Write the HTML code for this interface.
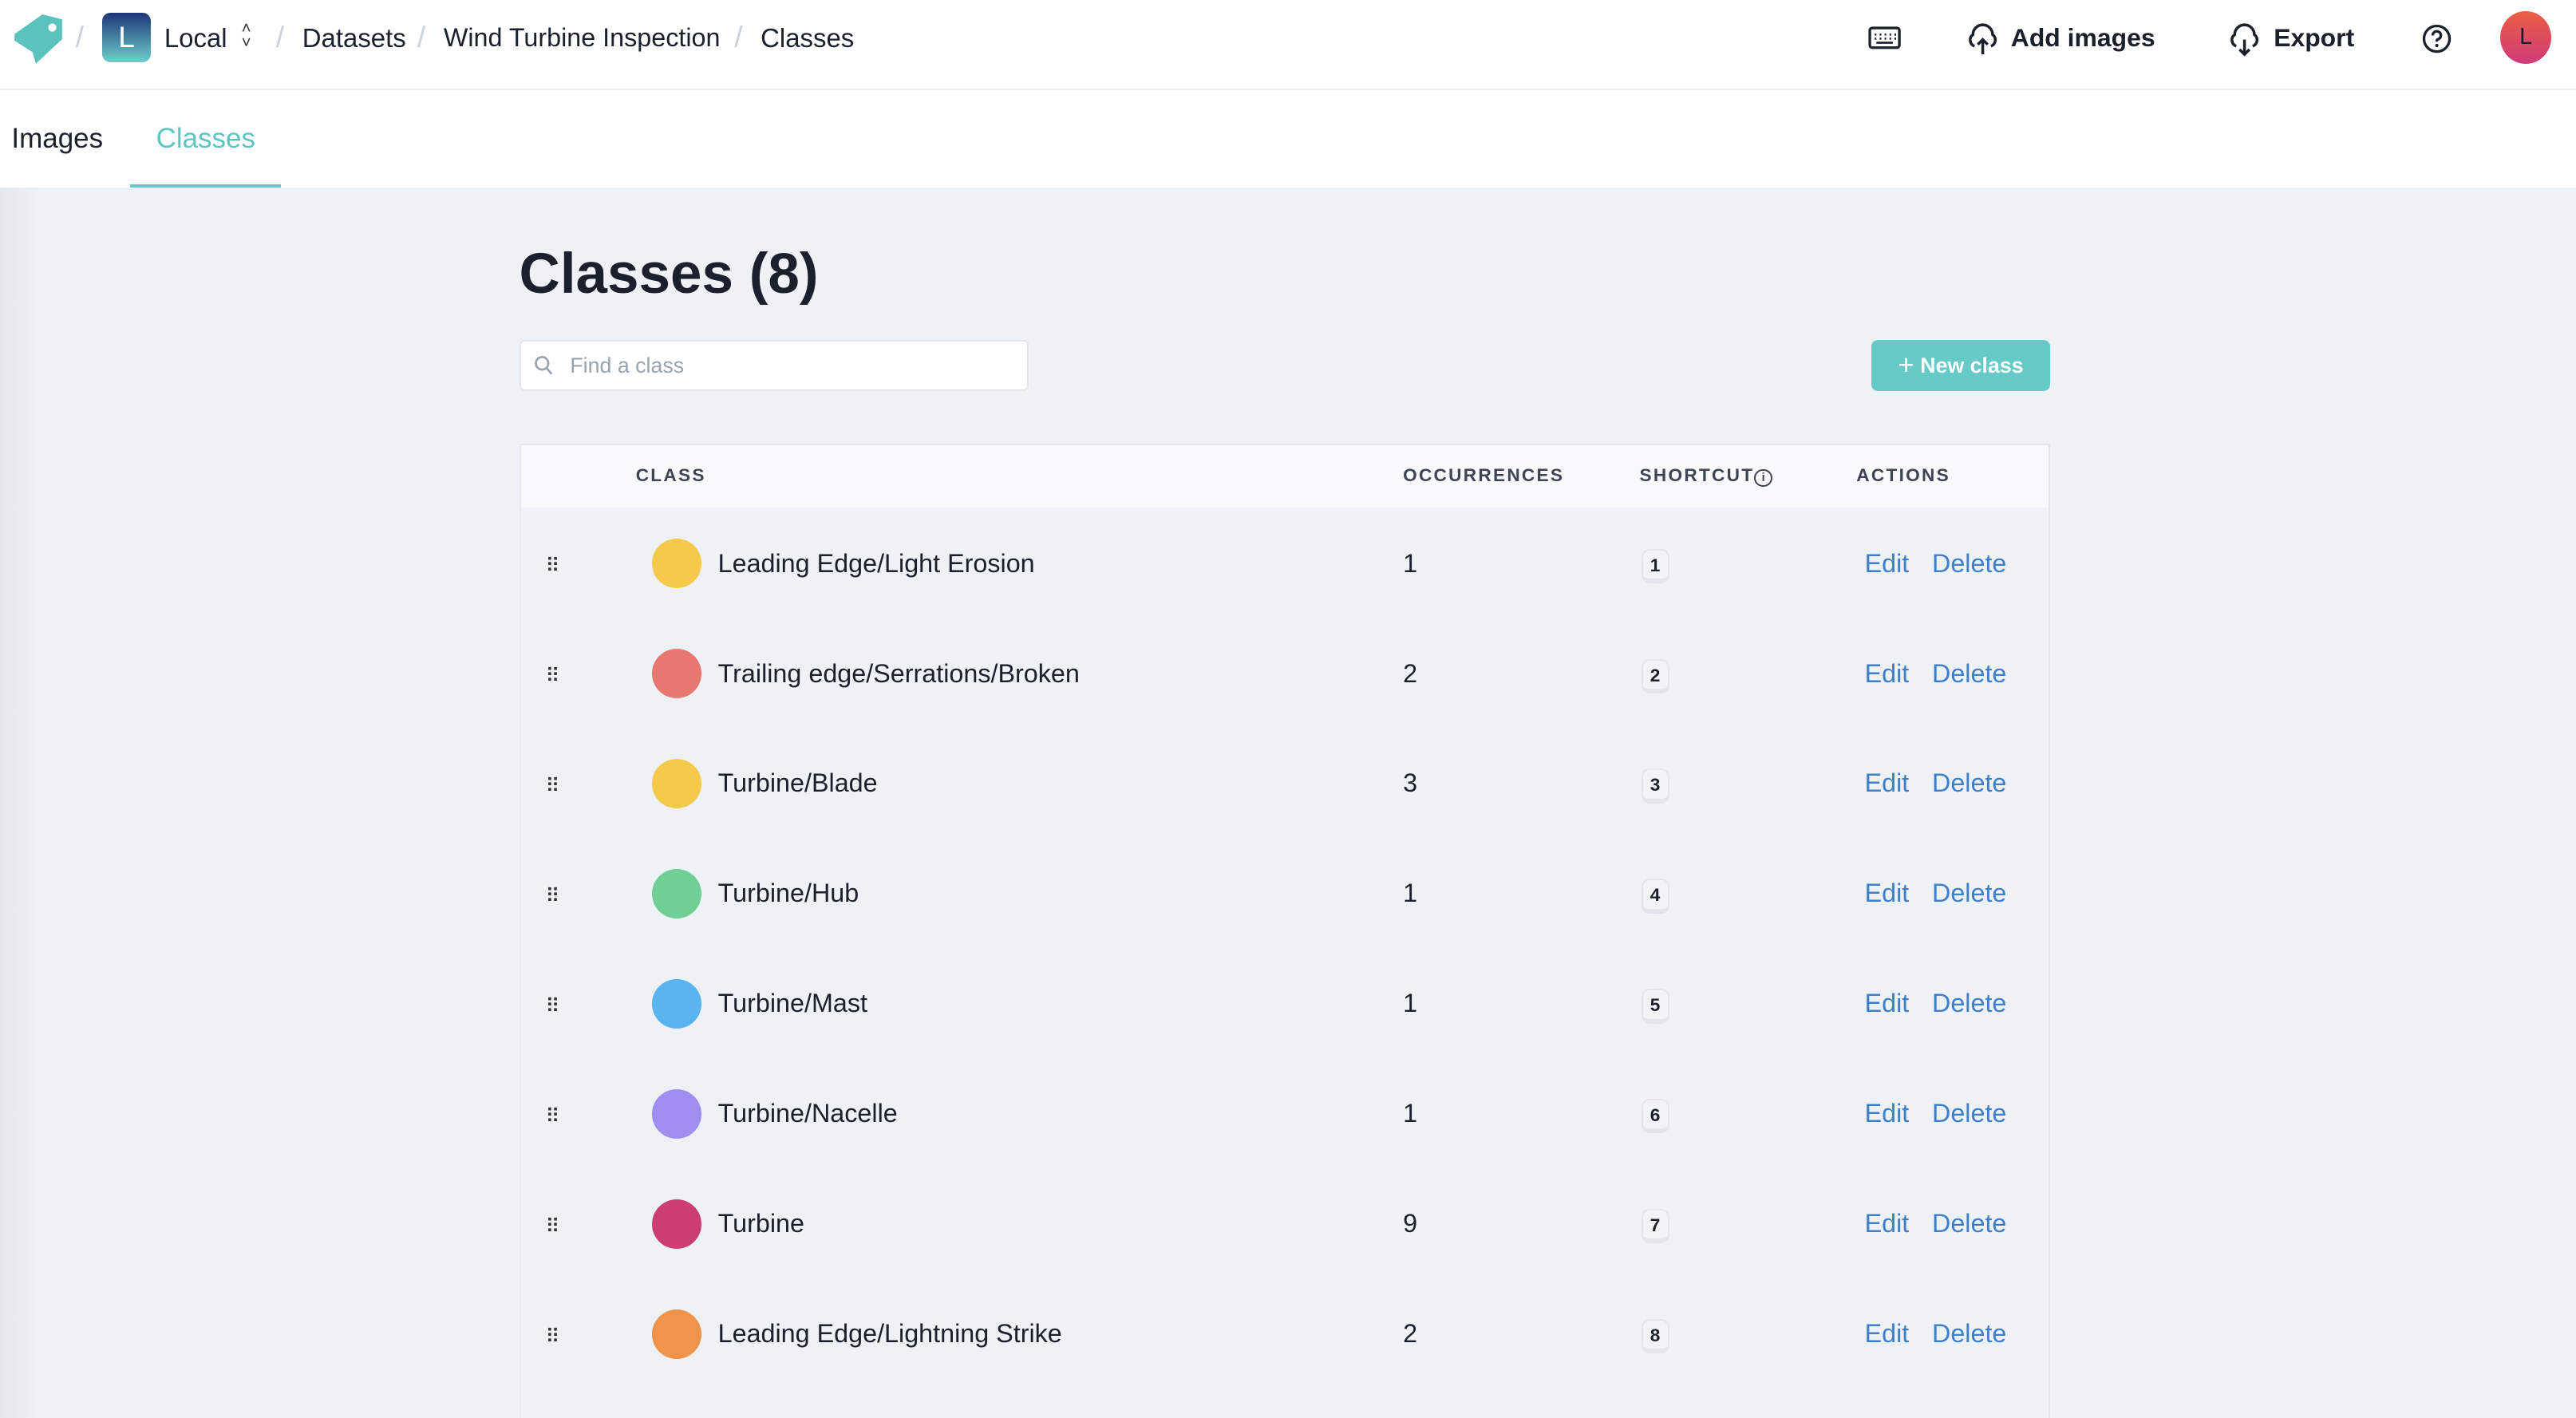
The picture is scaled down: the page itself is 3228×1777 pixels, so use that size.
<!DOCTYPE html>
<html><head><meta charset="utf-8"><style>
html,body{margin:0;padding:0;}
html{width:3228px;height:1776px;overflow:hidden;background:#eef1f6;}
body{zoom:2.05867;width:1568px;height:863px;position:relative;font-family:"Liberation Sans",sans-serif;color:#1a202c;background:#eef1f6;overflow:hidden;}
.abs{position:absolute;}
.top{left:0;top:0;width:1568px;height:54px;background:#fff;border-bottom:1px solid #e8ecf1;}
.tabs{left:0;top:55px;width:1568px;height:59px;background:#fff;}
.crumb{top:14px;font-size:16px;color:#1a202c;}
.sl{top:12px;font-size:18px;color:#cbd2dc;}
.shade{left:0;top:114px;width:24px;height:749px;background:linear-gradient(90deg,#e4e7ec,#eef1f6);}
.row{left:316px;width:932px;height:67px;}
.row .drag{position:absolute;left:16px;top:33px;font-size:12px;line-height:6px;color:#333;letter-spacing:1px}
.row .dot{position:absolute;left:81px;top:19px;width:30px;height:30px;border-radius:50%;}
.row .nm{position:absolute;left:121px;top:25px;font-size:15.7px;}
.row .oc{position:absolute;left:538px;top:25px;font-size:15.7px;}
.row .bd{position:absolute;left:683px;top:25px;width:17px;border:1px solid #e2e6ec;border-bottom-width:3px;border-radius:5px;background:#f1f3f7;font-size:11px;font-weight:bold;text-align:center;line-height:18px;box-sizing:border-box;height:21px}
.row .ed{position:absolute;left:819px;top:25px;font-size:15.7px;color:#3d7fc9;}
.row .de{position:absolute;left:860px;top:25px;font-size:15.7px;color:#3d7fc9;}
.th{top:283px;font-size:11px;font-weight:bold;letter-spacing:1.1px;color:#3d4554;}
</style></head><body>
<div class="abs top"></div>
<svg class="abs" style="left:6px;top:8px" width="34" height="32" viewBox="0 0 34 32"><path d="M3 13 L20 1 L32 4 L32 16 L16 31 L14 24 L3 17 Z" fill="#5bc2bd"/><circle cx="26" cy="9" r="2.5" fill="#fff"/></svg>
<div class="abs sl" style="left:46px">/</div>
<div class="abs" style="left:62px;top:8px;width:30px;height:30px;border-radius:5px;background:linear-gradient(#1e3577,#6dd0cc);color:#fff;font-size:18px;text-align:center;line-height:30px">L</div>
<div class="abs crumb" style="left:100px">Local</div>
<div class="abs" style="left:147px;top:13px;font-size:10px;line-height:9px;color:#333">˄<br>˅</div>
<div class="abs sl" style="left:168px">/</div>
<div class="abs crumb" style="left:184px">Datasets</div>
<div class="abs sl" style="left:254px">/</div>
<div class="abs crumb" style="left:270px;font-size:15.7px">Wind Turbine Inspection</div>
<div class="abs sl" style="left:447px">/</div>
<div class="abs crumb" style="left:463px">Classes</div>
<svg class="abs" style="left:1137px;top:16px" width="20" height="14" viewBox="0 0 20 14"><rect x="1" y="1" width="18" height="12" rx="1.5" fill="none" stroke="#1a202c" stroke-width="1.6"/><path d="M4 5h1M7 5h1M10 5h1M13 5h1M16 5h1M4 7.5h1M7 7.5h1M10 7.5h1M13 7.5h1M16 7.5h1M5 10h10" stroke="#1a202c" stroke-width="1.3"/></svg>
<svg class="abs" style="left:1197px;top:13px" width="20" height="22" viewBox="0 0 20 22"><path d="M5 15 A4 4 0 0 1 4 8 A6 6 0 0 1 16 8 A4 4 0 0 1 15 15" fill="none" stroke="#1a202c" stroke-width="1.7"/><path d="M10 20V11M7 14l3-3 3 3" fill="none" stroke="#1a202c" stroke-width="1.7"/></svg>
<div class="abs crumb" style="left:1224px;top:14px;font-weight:bold;font-size:15.5px">Add images</div>
<svg class="abs" style="left:1356px;top:13px" width="20" height="22" viewBox="0 0 20 22"><path d="M5 15 A4 4 0 0 1 4 8 A6 6 0 0 1 16 8 A4 4 0 0 1 15 15" fill="none" stroke="#1a202c" stroke-width="1.7"/><path d="M10 11V20M7 17l3 3 3-3" fill="none" stroke="#1a202c" stroke-width="1.7"/></svg>
<div class="abs crumb" style="left:1384px;top:14px;font-weight:bold;font-size:15.5px">Export</div>
<svg class="abs" style="left:1474px;top:14px" width="19" height="19" viewBox="0 0 19 19"><circle cx="9.5" cy="9.5" r="7.8" fill="none" stroke="#1a202c" stroke-width="1.6"/><path d="M7 7.5a2.5 2.5 0 1 1 3 2.4c-.5.2-.5.6-.5 1.4" fill="none" stroke="#1a202c" stroke-width="1.6"/><circle cx="9.5" cy="13.6" r="1" fill="#1a202c"/></svg>
<div class="abs" style="left:1522px;top:7px;width:31px;height:32px;border-radius:50%;background:linear-gradient(#ec5e45,#cf3a7a);font-size:14px;text-align:center;line-height:32px;color:#1a202c">L</div>
<div class="abs tabs"></div>
<div class="abs" style="left:7px;top:75px;font-size:17px">Images</div>
<div class="abs" style="left:95px;top:75px;font-size:17px;color:#5ec6c1">Classes</div>
<div class="abs" style="left:79px;top:112px;width:92px;height:2px;background:#66cbc7"></div>
<div class="abs shade"></div>
<div class="abs" style="left:316px;top:147px;font-size:34.5px;font-weight:bold;color:#1a202c">Classes (8)</div>
<div class="abs" style="left:316px;top:207px;width:310px;height:31px;background:#fff;border:1px solid #e2e6ec;border-radius:3px;box-sizing:border-box"></div>
<svg class="abs" style="left:325px;top:216px" width="12" height="13" viewBox="0 0 12 13"><circle cx="5" cy="5" r="3.8" fill="none" stroke="#9aa3b0" stroke-width="1.3"/><path d="M7.8 8l3 3.5" stroke="#9aa3b0" stroke-width="1.3"/></svg>
<div class="abs" style="left:347px;top:215px;font-size:13px;color:#9aa3b0">Find a class</div>
<div class="abs" style="left:1139px;top:207px;width:109px;height:31px;background:#66cbc7;border-radius:4px;color:#fff;font-size:13px;line-height:31px;text-align:center;font-weight:bold"><span style="font-size:17px;font-weight:normal;vertical-align:-1px">+</span> New class</div>
<div class="abs" style="left:316px;top:270px;width:932px;height:39px;background:#f8f9fb;border-top:1px solid #e2e6ec;box-sizing:border-box"></div>
<div class="abs" style="left:1247px;top:270px;width:1px;height:593px;background:#e2e6ec"></div>
<div class="abs" style="left:316px;top:270px;width:1px;height:593px;background:#e6e9ee"></div>
<div class="abs th" style="left:387px">CLASS</div>
<div class="abs th" style="left:854px">OCCURRENCES</div>
<div class="abs th" style="left:998px">SHORTCUT<span style="display:inline-block;width:9px;height:9px;border:1px solid #3d4554;border-radius:50%;font-size:7px;line-height:9px;text-align:center;letter-spacing:0;vertical-align:0px">i</span></div>
<div class="abs th" style="left:1130px">ACTIONS</div>

<div class="abs row" style="top:309px"><div class="drag">⠿</div><div class="dot" style="background:#f5c94a"></div><div class="nm">Leading Edge/Light Erosion</div><div class="oc">1</div><div class="bd">1</div><div class="ed">Edit</div><div class="de">Delete</div></div>
<div class="abs row" style="top:376px"><div class="drag">⠿</div><div class="dot" style="background:#e8776f"></div><div class="nm">Trailing edge/Serrations/Broken</div><div class="oc">2</div><div class="bd">2</div><div class="ed">Edit</div><div class="de">Delete</div></div>
<div class="abs row" style="top:443px"><div class="drag">⠿</div><div class="dot" style="background:#f5c94a"></div><div class="nm">Turbine/Blade</div><div class="oc">3</div><div class="bd">3</div><div class="ed">Edit</div><div class="de">Delete</div></div>
<div class="abs row" style="top:510px"><div class="drag">⠿</div><div class="dot" style="background:#6fcf97"></div><div class="nm">Turbine/Hub</div><div class="oc">1</div><div class="bd">4</div><div class="ed">Edit</div><div class="de">Delete</div></div>
<div class="abs row" style="top:577px"><div class="drag">⠿</div><div class="dot" style="background:#5ab4ef"></div><div class="nm">Turbine/Mast</div><div class="oc">1</div><div class="bd">5</div><div class="ed">Edit</div><div class="de">Delete</div></div>
<div class="abs row" style="top:644px"><div class="drag">⠿</div><div class="dot" style="background:#a08ef0"></div><div class="nm">Turbine/Nacelle</div><div class="oc">1</div><div class="bd">6</div><div class="ed">Edit</div><div class="de">Delete</div></div>
<div class="abs row" style="top:711px"><div class="drag">⠿</div><div class="dot" style="background:#cc3e72"></div><div class="nm">Turbine</div><div class="oc">9</div><div class="bd">7</div><div class="ed">Edit</div><div class="de">Delete</div></div>
<div class="abs row" style="top:778px"><div class="drag">⠿</div><div class="dot" style="background:#f0944c"></div><div class="nm">Leading Edge/Lightning Strike</div><div class="oc">2</div><div class="bd">8</div><div class="ed">Edit</div><div class="de">Delete</div></div>
</body></html>
